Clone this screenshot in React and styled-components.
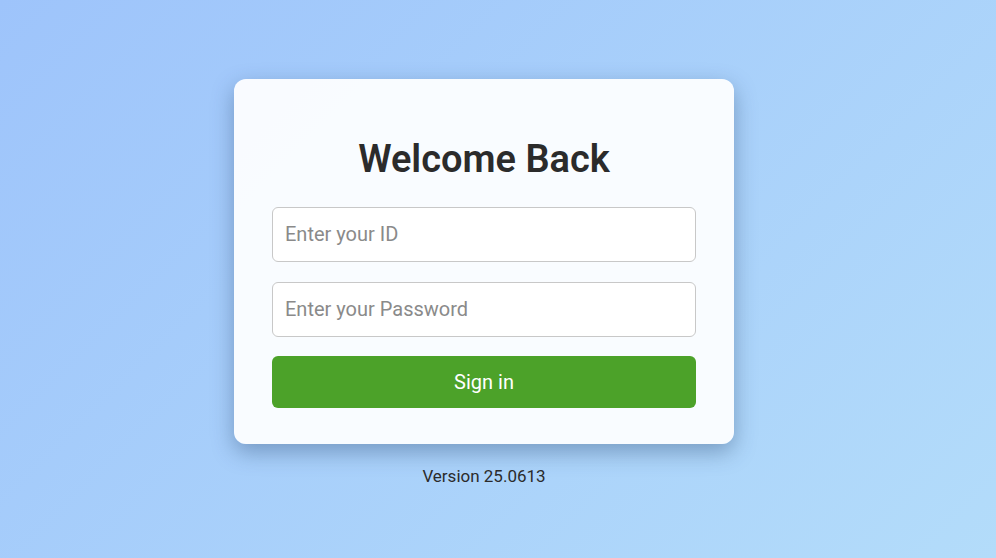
import React, { useState } from 'react';
import styled, { createGlobalStyle } from 'styled-components';

const GlobalStyle = createGlobalStyle`
  * {
    box-sizing: border-box;
  }

  html, body, #root {
    margin: 0;
    height: 100%;
  }

  body {
    font-family: Roboto, "Liberation Sans", sans-serif;
    background: linear-gradient(135deg, #9ec4fb 0%, #b3dcfa 100%);
  }
`;

const Page = styled.main`
  height: 100%;
  display: flex;
  flex-direction: column;
  align-items: center;
  justify-content: center;
  padding: 6px 28px 0 0;
`;

const Card = styled.form`
  width: 500px;
  padding: 57px 38px 36px;
  display: flex;
  flex-direction: column;
  gap: 20px;
  background: rgba(255, 255, 255, 0.93);
  border-radius: 12px;
  box-shadow: 0 8px 22px rgba(40, 70, 110, 0.4);
`;

const Title = styled.h1`
  margin: 0 0 4px;
  text-align: center;
  font-size: 38px;
  line-height: 47px;
  font-weight: 600;
  color: #2b2b2b;
`;

const Input = styled.input`
  height: 55px;
  width: 100%;
  padding: 0 12px;
  font-family: inherit;
  font-size: 20px;
  color: #333;
  background: #fff;
  border: 1px solid #c8c8c8;
  border-radius: 6px;
  outline: none;

  &::placeholder {
    color: #8a8a8a;
  }
`;

const Button = styled.button`
  height: 52px;
  width: 100%;
  margin-top: -1px;
  font-family: inherit;
  font-size: 20px;
  color: #fff;
  background: #4ca229;
  border: none;
  border-radius: 6px;
  cursor: pointer;
`;

const Version = styled.p`
  margin: 22px 0 0;
  font-size: 17px;
  color: #2b2b2b;
`;

const App = () => {
    const [id, setId] = useState('')
    const [password, setPassword] = useState('')

    const handleSubmit = (e) => {
        e.preventDefault()
    }

    return (
        <>
            <GlobalStyle />
            <Page>
                <Card onSubmit={handleSubmit}>
                    <Title>Welcome Back</Title>
                    <Input
                        type="text"
                        placeholder="Enter your ID"
                        value={id}
                        onChange={(e) => setId(e.target.value)}
                    />
                    <Input
                        type="password"
                        placeholder="Enter your Password"
                        value={password}
                        onChange={(e) => setPassword(e.target.value)}
                    />
                    <Button type="submit">Sign in</Button>
                </Card>
                <Version>Version 25.0613</Version>
            </Page>
        </>
    );
};

export default App;
